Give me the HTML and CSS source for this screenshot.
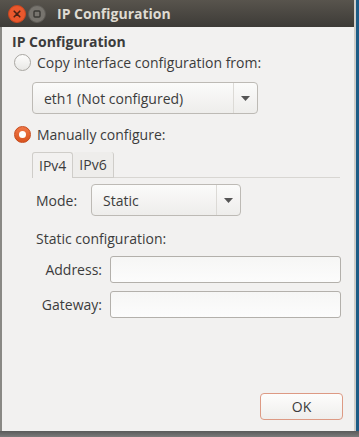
FILE: index.html
```html
<!DOCTYPE html>
<html>
<head>
<meta charset="utf-8">
<link rel="stylesheet" href="styles.css">
</head>
<body>
<div class="screen">
  <div class="window">
    <div class="titlebar">
      <div class="wbtn close">
        <svg width="18" height="18" viewBox="0 0 18 18"><circle cx="9" cy="9" r="8.5" fill="#e9582d" stroke="#c9461f" stroke-width="1"/><path d="M6.2 6.2 L11.8 11.8 M11.8 6.2 L6.2 11.8" stroke="#4a2214" stroke-width="1.6" stroke-linecap="round"/></svg>
      </div>
      <div class="wbtn min">
        <svg width="18" height="18" viewBox="0 0 18 18"><circle cx="9" cy="9" r="8.5" fill="#77746e" stroke="#5d5a55" stroke-width="1"/><rect x="6" y="6" width="6" height="6" rx="1" fill="none" stroke="#3a3834" stroke-width="1.4"/></svg>
      </div>
      <div class="title">IP Configuration</div>
    </div>
    <div class="content">
      <div class="heading">IP Configuration</div>
      <label class="radio-row">
        <span class="radio"></span>
        <span>Copy interface configuration from:</span>
      </label>
      <div class="combo wide">
        <span class="combo-text">eth1 (Not configured)</span>
        <span class="combo-arrow"><svg width="9" height="5" viewBox="0 0 9 5"><path d="M0 0 H9 L4.5 5 Z" fill="#555"/></svg></span>
      </div>
      <label class="radio-row manual">
        <span class="radio on"></span>
        <span>Manually configure:</span>
      </label>
      <div class="tabs">
        <div class="tab active">IPv4</div>
        <div class="tab">IPv6</div>
        <div class="tab-rest"></div>
      </div>
      <div class="tabpage">
        <div class="mode-row">
          <span class="mode-label">Mode:</span>
          <div class="combo mode">
            <span class="combo-text">Static</span>
            <span class="combo-arrow"><svg width="9" height="5" viewBox="0 0 9 5"><path d="M0 0 H9 L4.5 5 Z" fill="#555"/></svg></span>
          </div>
        </div>
        <div class="static-label">Static configuration:</div>
        <div class="form">
          <span class="flabel">Address:</span>
          <div class="entry"></div>
          <span class="flabel">Gateway:</span>
          <div class="entry"></div>
        </div>
      </div>
      <div class="spacer"></div>
      <div class="actions">
        <button class="ok">OK</button>
      </div>
    </div>
  </div>
  <div class="edge"></div>
</div>
<div class="bottom"></div>
</body>
</html>
```
FILE: styles.css
```css
* { box-sizing: border-box; }
html, body { margin: 0; padding: 0; }
body {
  width: 359px;
  height: 437px;
  overflow: hidden;
  background: #6a6a6a;
  font-family: "Open Sans", "Noto Sans", sans-serif;
  font-size: 14px;
  color: #3c3c3c;
}
.screen {
  display: flex;
  height: 431px;
}
.window {
  width: 354px;
  display: flex;
  flex-direction: column;
  background: #f2f1f0;
  border-left: 2px solid #8a8985;
}
.edge {
  flex: 1;
  background: linear-gradient(to right, #cfcdc9 0, #cfcdc9 2px, #1d5b85 2px);
}
.titlebar {
  height: 27px;
  flex: none;
  display: flex;
  align-items: center;
  background: linear-gradient(#58544d, #3d3b37);
  margin-left: -2px;
  padding-left: 8px;
}
.wbtn { width: 18px; height: 18px; margin-right: 2px; display: flex; }
.title {
  margin-left: 9px;
  color: #dfdbd2;
  font-weight: bold;
  font-size: 14px;
}
.content {
  flex: 1;
  display: flex;
  flex-direction: column;
  padding: 6px 10px 11px 10px;
}
.heading {
  font-weight: bold;
  font-size: 14px;
  line-height: 18px;
  color: #3c3c3c;
}
.radio-row {
  display: flex;
  align-items: center;
  gap: 6px;
  height: 22px;
  margin-left: 2px;
}
.radio {
  width: 17px;
  height: 17px;
  border-radius: 50%;
  border: 1px solid #a9a7a2;
  background: linear-gradient(#fdfdfc, #e8e7e5);
  display: flex;
  align-items: center;
  justify-content: center;
}
.radio.on {
  border-color: #c64a1c;
  background: linear-gradient(#f07848, #d9541f);
}
.radio.on::after {
  content: "";
  width: 7px;
  height: 7px;
  border-radius: 50%;
  background: #fff;
}
.combo {
  display: flex;
  align-items: center;
  border: 1px solid #bdbab5;
  border-radius: 4px;
  background: linear-gradient(#fbfbfa, #eeedeb);
  height: 32px;
}
.combo.wide {
  margin: 9px 0 0 20px;
  width: 226px;
}
.combo-text { flex: 1; padding-left: 11px; }
.combo-arrow {
  width: 24px;
  height: 100%;
  border-left: 1px solid #dcdad6;
  display: flex;
  align-items: center;
  justify-content: center;
}
.radio-row.manual { margin-top: 9px; }
.tabs {
  display: flex;
  margin: 7px 0 0 20px;
  height: 26px;
}
.tab {
  padding: 0 6px;
  line-height: 25px;
  border: 1px solid #cfcdc9;
  border-bottom: none;
  border-radius: 3px 3px 0 0;
  background: #ebeae8;
  border-left: none;
}
.tab.active {
  background: #f2f1f0;
  border-left: 1px solid #cfcdc9;
  height: 26px;
}
.tab:not(.active) { border-bottom: 1px solid #cfcdc9; height: 26px; border-top: none; background: #eeedeb; }
.tab-rest { flex: 1; border-bottom: 1px solid #d8d6d2; margin-right: 4px; }
.tabpage {
  padding: 6px 0 0 24px;
}
.mode-row {
  display: flex;
  align-items: center;
}
.mode-label { width: 55px; }
.combo.mode { width: 150px; }
.static-label { margin-top: 13px; line-height: 20px; }
.form {
  display: grid;
  grid-template-columns: 74px 231px;
  row-gap: 8px;
  margin-top: 7px;
  align-items: center;
}
.flabel { text-align: right; padding-right: 8px; }
.entry {
  height: 27px;
  border: 1px solid #b3b0ab;
  border-radius: 3px;
  background: linear-gradient(#f6f6f5, #fcfcfc);
}
.spacer { flex: 1; }
.actions { display: flex; justify-content: flex-end; padding-right: 1px; }
.ok {
  width: 83px;
  height: 27px;
  border: 1px solid #dd9a84;
  border-radius: 4px;
  background: linear-gradient(#fdfdfc, #efeeec);
  font-family: inherit;
  font-size: 14px;
  color: #3c3c3c;
}
.bottom {
  height: 6px;
  background: linear-gradient(#5a5a5a, #7a7a7a);
}
```
